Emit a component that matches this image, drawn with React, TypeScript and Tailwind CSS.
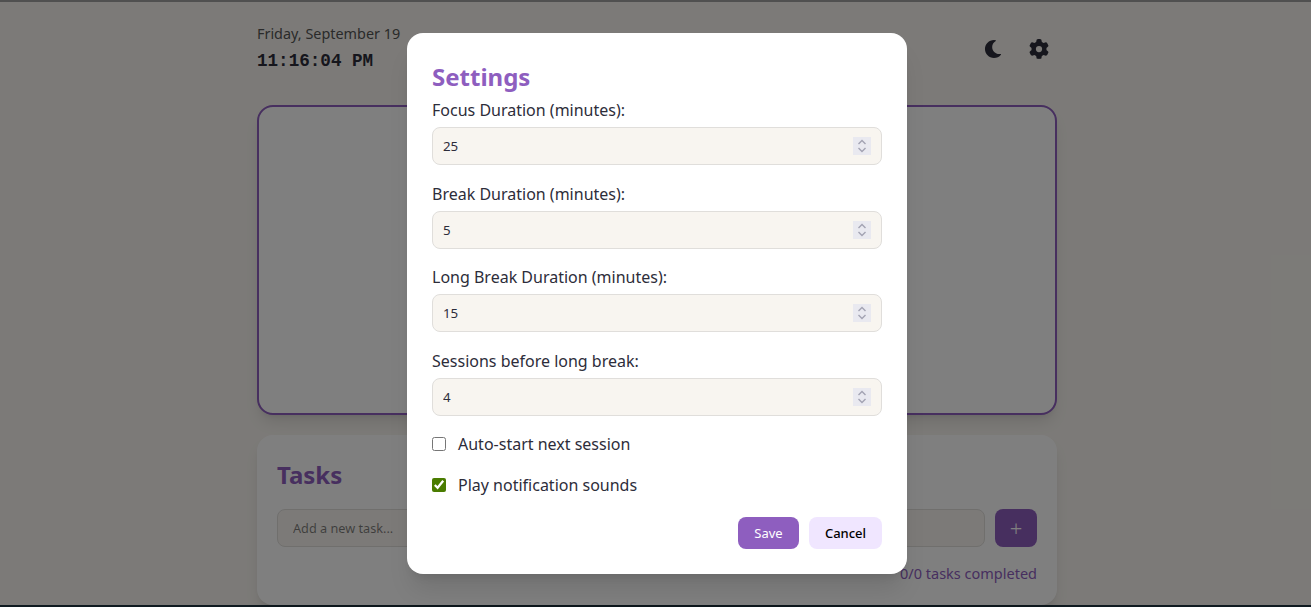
import { FaMoon } from 'react-icons/fa'
import { FaGear } from 'react-icons/fa6'

const FIELDS = [
  { label: 'Focus Duration (minutes):', value: 25 },
  { label: 'Break Duration (minutes):', value: 5 },
  { label: 'Long Break Duration (minutes):', value: 15 },
  { label: 'Sessions before long break:', value: 4 },
]

function NumberField({ label, value }: { label: string; value: number }) {
  return (
    <div className="mb-[15.55px]">
      <label className="block h-[26px] text-[16px] leading-[26px] text-[#2d2d3a]">{label}</label>
      <div className="relative mt-[4px]">
        <input
          type="number"
          defaultValue={value}
          className="box-border block h-[38px] w-full rounded-[8px] border border-[#e0dedb] bg-[#f8f5f0] px-[10px] text-[13.3px] text-[#2d2d3a] [appearance:textfield] [&::-webkit-inner-spin-button]:appearance-none"
        />
        {/* Spinner */}
        <div className="pointer-events-none absolute right-[11px] top-[10px] flex h-[18px] w-[18px] items-center justify-center bg-[#e9e9f0]">
          <svg width="10" height="14" viewBox="0 0 10 14" fill="none" stroke="#a3a3b3" strokeWidth="1.4">
            <path d="M1.5 5L5 1.5L8.5 5" />
            <path d="M1.5 9L5 12.5L8.5 9" />
          </svg>
        </div>
      </div>
    </div>
  )
}

export default function App() {
  return (
    <div className="relative h-[607px] overflow-hidden bg-[#1e3440] font-['Noto_Sans',sans-serif]">
      <div className="h-[2px] bg-[#a0a0a0]" />

      {/* Page behind the modal */}
      <div className="mb-[2px] h-[603px] bg-[#f8f5f0] pl-[3px]">
        <div className="mx-auto w-[800px] pt-[22px]">
          <header className="flex h-[81px] items-start justify-between">
            <div>
              <div className="text-[14.4px] leading-[20px] text-[#555]">Friday, September 19</div>
              <div className="mt-[6px] font-['Liberation_Mono',monospace] text-[17.6px] font-bold leading-[22px] text-[#2d2d3a]">
                11:16:04 PM
              </div>
            </div>
            <div className="mr-[8px] mt-[15px] flex items-center gap-[27px] text-[#2d2d3a]">
              <FaMoon className="h-[18px] w-[18px]" />
              <FaGear className="h-[20px] w-[20px]" />
            </div>
          </header>

          <section className="h-[310px] rounded-[16px] border-2 border-[#8e5ebf] bg-white shadow-lg" />

          <section className="mt-[20px] h-[170px] rounded-[16px] bg-white px-[20px] pt-[20px] shadow-lg">
            <h2 className="text-[24px] font-bold leading-[40px] text-[#8e5ebf]">Tasks</h2>
            <div className="mt-[14px] flex gap-[10px]">
              <input
                placeholder="Add a new task..."
                className="box-border h-[38px] min-w-0 flex-1 rounded-[8px] border border-[#e0dedb] bg-[#f8f5f0] px-[15px] text-[12.7px]"
              />
              <button className="flex h-[38px] w-[42px] items-center justify-center rounded-[8px] bg-[#8e5ebf] text-[22px] font-light text-white">
                +
              </button>
            </div>
            <div className="mt-[16px] text-right text-[14.5px] leading-[20px] text-[#8e5ebf]">0/0 tasks completed</div>
          </section>
        </div>
      </div>

      {/* Modal */}
      <div className="absolute inset-0 flex items-center justify-center bg-black/50 pl-[3px]">
        <div className="box-border h-[541px] w-[500px] rounded-[16px] bg-white px-[25px] pt-[24px] shadow-xl">
          <h2 className="text-[24px] font-bold leading-[40px] text-[#8e5ebf]">Settings</h2>
          {FIELDS.map((f) => (
            <NumberField key={f.label} label={f.label} value={f.value} />
          ))}
          <div className="mt-[16.5px] flex flex-col gap-[17px] text-[16px] leading-[24px] text-[#2d2d3a]">
            <label className="flex items-center gap-[12px]">
              <input type="checkbox" className="ml-0 h-[14px] w-[14px]" />
              Auto-start next session
            </label>
            <label className="flex items-center gap-[12px]">
              <input type="checkbox" defaultChecked className="ml-0 h-[14px] w-[14px] accent-[#4a7c00]" />
              Play notification sounds
            </label>
          </div>
          <div className="mt-[20px] flex justify-end gap-[10px]">
            <button className="h-[32px] w-[61px] rounded-[8px] bg-[#8e5ebf] pt-[1px] text-[13px] text-white">Save</button>
            <button className="h-[32px] w-[73px] rounded-[8px] bg-[#f0e6ff] pt-[1px] text-[13px] font-medium text-black">Cancel</button>
          </div>
        </div>
      </div>
    </div>
  )
}
